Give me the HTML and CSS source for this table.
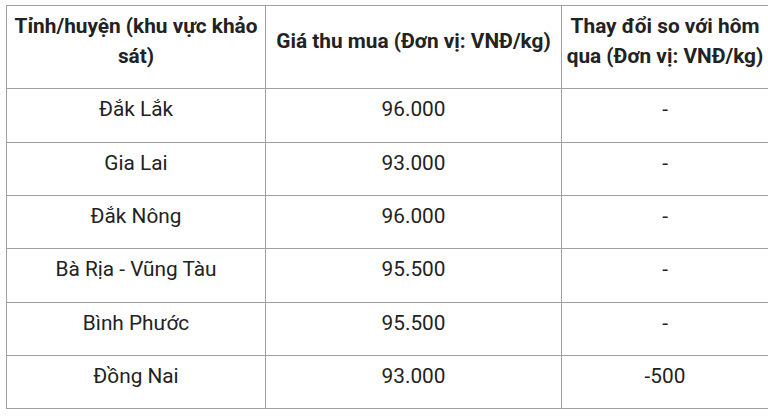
FILE: index.html
```html
<!DOCTYPE html>
<html lang="vi">
<head>
<meta charset="utf-8">
<title>Giá thu mua</title>
<link rel="stylesheet" href="styles.css">
</head>
<body>
<div class="wrap">
<table class="price">
<colgroup>
<col class="c1"><col class="c2"><col class="c3">
</colgroup>
<thead>
<tr>
<th>Tỉnh/huyện (khu vực khảo sát)</th>
<th>Giá thu mua (Đơn vị: VNĐ/kg)</th>
<th>Thay đổi so với hôm qua (Đơn vị: VNĐ/kg)</th>
</tr>
</thead>
<tbody>
<tr><td>Đắk Lắk</td><td>96.000</td><td>-</td></tr>
<tr><td>Gia Lai</td><td>93.000</td><td>-</td></tr>
<tr><td>Đắk Nông</td><td>96.000</td><td>-</td></tr>
<tr><td>Bà Rịa - Vũng Tàu</td><td>95.500</td><td>-</td></tr>
<tr><td>Bình Phước</td><td>95.500</td><td>-</td></tr>
<tr><td>Đồng Nai</td><td>93.000</td><td>-500</td></tr>
</tbody>
</table>
</div>
</body>
</html>
```
FILE: styles.css
```css
html, body {
  margin: 0;
  background: #ffffff;
}
.wrap {
  padding: 5px 0 0 6px;
}
.price {
  border-collapse: collapse;
  table-layout: fixed;
  width: 762px;
  font-family: Roboto, "Noto Sans", Arial, sans-serif;
  font-size: 20.8px;
  line-height: 30px;
  color: #222222;
}
.c1 { width: 259px; }
.c2 { width: 296px; }
.c3 { width: 207px; }
.price th,
.price td {
  border: 1px solid #a0a0a0;
  padding: 5px 4px 17.33px;
  text-align: center;
}
.price th {
  font-weight: 700;
  vertical-align: middle;
}
.price td {
  font-weight: 400;
  vertical-align: top;
}
```
